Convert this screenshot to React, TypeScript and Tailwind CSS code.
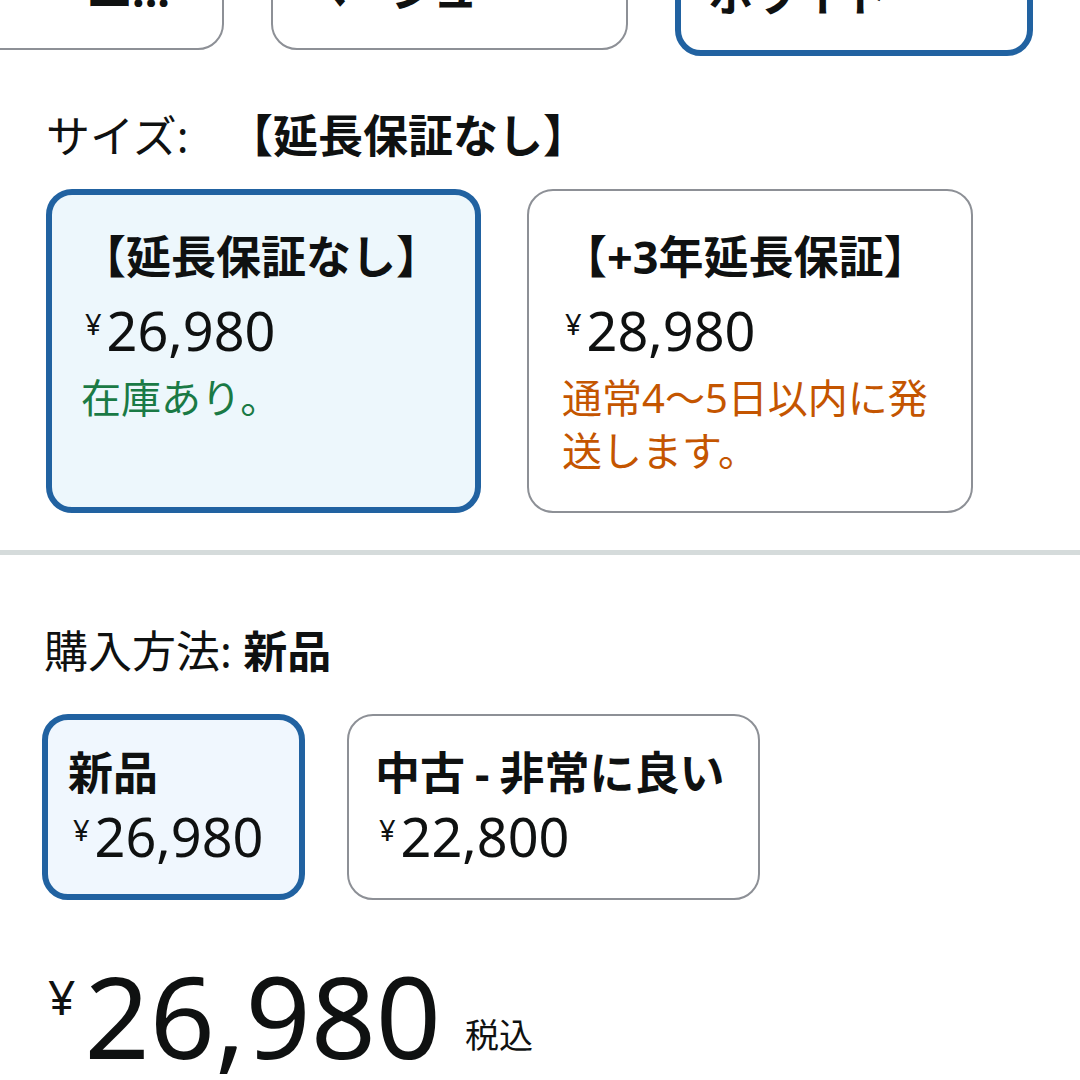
import React from 'react';

const font = "[font-family:'Noto_Sans','Noto_Sans_CJK_JP',sans-serif]";

const colors = [
  { label: 'エ...', selected: false, w: 'w-[357px]', justify: 'justify-end pr-[52px]' },
  { label: 'ベージュ', selected: false, w: 'w-[357px]', justify: 'pl-[29px]' },
  { label: 'ホワイト', selected: true, w: 'w-[358px]', justify: 'pl-[27px]' },
];

const Price: React.FC<{ value: string }> = ({ value }) => (
  <div className="flex items-start leading-none">
    <span className="text-[29px] mt-[6px] mr-[5px]">¥</span>
    <span className="text-[54px]">{value}</span>
  </div>
);

export default function App() {
  return (
    <div className={`w-[1080px] h-[1080px] overflow-hidden bg-white text-[#0f1111] ${font}`}>
      {/* color row, scrolled so only the bottoms show */}
      <div className="flex items-start gap-[47px] -mt-[100px] -ml-[133px]">
        {colors.map((c) => (
          <div
            key={c.label}
            className={`${c.w} flex ${c.justify} rounded-[26px] bg-white ${
              c.selected ? 'h-[156px] border-[6px] border-[#2162a1] pt-[61px]' : 'h-[150px] border-2 border-[#8d9096] pt-[60px]'
            }`}
          >
            <span className="text-[45px] leading-[56px] font-bold whitespace-nowrap">{c.label}</span>
          </div>
        ))}
      </div>

      {/* size */}
      <div className="pl-[46px] mt-[52px] text-[44px] leading-[56px] whitespace-nowrap">
        サイズ: <span className="font-bold text-[45px] ml-[28px]">【延長保証なし】</span>
      </div>

      <div className="flex items-stretch gap-[46px] pl-[46px] mt-[25px]">
        <div className="w-[435px] rounded-[26px] border-[6px] border-[#2162a1] bg-[#edf7fc] pl-[29px] pr-[20px] pt-[34px] pb-[28px]">
          <div className="text-[45px] leading-[56px] font-bold whitespace-nowrap">【延長保証なし】</div>
          <div className="mt-[18px] ml-[4px]">
            <Price value="26,980" />
          </div>
          <div className="mt-[14px] text-[40px] leading-[53px] text-[#1a7a45]">在庫あり。</div>
        </div>
        <div className="w-[446px] rounded-[26px] border-2 border-[#8d9096] bg-white pl-[33px] pr-[28px] pt-[38px] pb-[34px]">
          <div className="text-[45px] leading-[56px] font-bold whitespace-nowrap">【+3年延長保証】</div>
          <div className="mt-[18px] ml-[3px]">
            <Price value="28,980" />
          </div>
          <div className="mt-[14px] text-[40px] leading-[53px] text-[#c45500]">通常4〜5日以内に発送します。</div>
        </div>
      </div>

      <div className="mt-[37px] h-[5px] bg-[#d5dbdb]" />

      {/* purchase method */}
      <div className="pl-[44px] mt-[68px] text-[44px] leading-[56px] whitespace-nowrap">
        購入方法: <span className="font-bold">新品</span>
      </div>

      <div className="flex items-stretch gap-[42px] pl-[42px] mt-[35px]">
        <div className="w-[263px] rounded-[26px] border-[6px] border-[#2162a1] bg-[#f0f7fe] pl-[20px] pt-[25px] pb-[31px]">
          <div className="text-[45px] leading-[56px] font-bold">新品</div>
          <div className="mt-[8px] ml-[5px]">
            <Price value="26,980" />
          </div>
        </div>
        <div className="w-[413px] rounded-[26px] border-2 border-[#8d9096] bg-white pl-[26px] pt-[29px] pb-[35px]">
          <div className="text-[45px] leading-[56px] font-bold whitespace-nowrap">
            中古<span className="mx-[10px]">-</span>非常に良い
          </div>
          <div className="mt-[8px] ml-[4px]">
            <Price value="22,800" />
          </div>
        </div>
      </div>

      {/* main price */}
      <div className="flex items-start pl-[48px] mt-[58px] leading-none">
        <span className="text-[48px] mt-[15px] mr-[9px]">¥</span>
        <span className="text-[114px]">26,980</span>
        <span className="text-[34px] mt-[60px] ml-[24px]">税込</span>
      </div>
    </div>
  );
}
